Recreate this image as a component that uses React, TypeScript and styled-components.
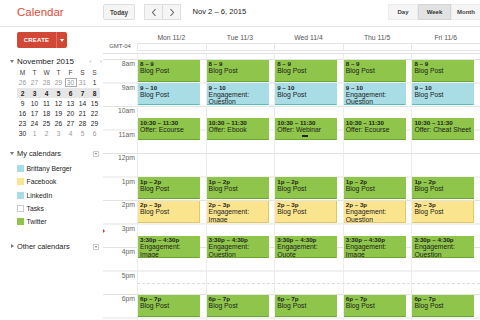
import styled, { createGlobalStyle } from 'styled-components'

const GlobalStyle = createGlobalStyle`
  html, body {
    margin: 0;
    padding: 0;
  }
  body {
    font-family: 'Liberation Sans', Arial, sans-serif;
    color: #222;
    background: #fff;
  }
`

type Tone = 'green' | 'blue' | 'yellow'
interface CalEvent {
  start: number
  end: number
  time: string
  title: string
  tone: Tone
  handle?: boolean
}
interface Day {
  label: string
  events: CalEvent[]
}

const HOUR = 23.5
const FIRST_HOUR = 8
const OFFSET = 5.5

const tones = {
  green: { bg: '#8fc54b', edge: '#6da432', side: '#8fc54b' },
  blue: { bg: '#a9dde6', edge: '#4cbfc7', side: '#a9dde6' },
  yellow: { bg: '#fbe48e', edge: '#e6c863', side: '#e6c863' },
}

function week(titles: string[]): CalEvent[] {
  return [
    { start: 8, end: 9, time: '8 – 9', title: 'Blog Post', tone: 'green' },
    { start: 9, end: 10, time: '9 – 10', title: titles[0], tone: 'blue' },
    { start: 10.5, end: 11.5, time: '10:30 – 11:30', title: titles[1], tone: 'green' },
    { start: 13, end: 14, time: '1p – 2p', title: 'Blog Post', tone: 'green' },
    { start: 14, end: 15, time: '2p – 3p', title: titles[2], tone: 'yellow' },
    { start: 15.5, end: 16.5, time: '3:30p – 4:30p', title: titles[3], tone: 'green' },
    { start: 18, end: 19, time: '6p – 7p', title: 'Blog Post', tone: 'green' },
  ]
}

const days: Day[] = [
  { label: 'Mon 11/2', events: week(['Blog Post', 'Offer: Ecourse', 'Blog Post', 'Engagement: Image']) },
  { label: 'Tue 11/3', events: week(['Engagement: Question', 'Offer: Ebook', 'Engagement: Image', 'Engagement: Question']) },
  { label: 'Wed 11/4', events: week(['Blog Post', 'Offer: Webinar', 'Blog Post', 'Engagement: Quote']) },
  { label: 'Thu 11/5', events: week(['Engagement: Question', 'Offer: Ecourse', 'Engagement: Question', 'Engagement: Image']) },
  { label: 'Fri 11/6', events: week(['Blog Post', 'Offer: Cheat Sheet', 'Blog Post', 'Engagement: Question']) },
]
days[2].events[2].handle = true

const hours = ['8am', '9am', '10am', '11am', '12pm', '1pm', '2pm', '3pm', '4pm', '5pm', '6pm', '7pm']

const miniWeeks: { d: string; muted?: boolean; today?: boolean }[][] = [
  [
    { d: '26', muted: true },
    { d: '27', muted: true },
    { d: '28', muted: true },
    { d: '29', muted: true },
    { d: '30', muted: true, today: true },
    { d: '31', muted: true },
    { d: '1' },
  ],
  ['2', '3', '4', '5', '6', '7', '8'].map((d) => ({ d })),
  ['9', '10', '11', '12', '13', '14', '15'].map((d) => ({ d })),
  ['16', '17', '18', '19', '20', '21', '22'].map((d) => ({ d })),
  ['23', '24', '25', '26', '27', '28', '29'].map((d) => ({ d })),
  [{ d: '30' }, ...['1', '2', '3', '4', '5', '6'].map((d) => ({ d, muted: true }))],
]

const calendars = [
  { name: 'Brittany Berger', color: '#a9dde6' },
  { name: 'Facebook', color: '#fbe48e' },
  { name: 'LinkedIn', color: '#a9dde6' },
  { name: 'Tasks', color: '#fff' },
  { name: 'Twitter', color: '#8fc54b' },
]

function Chevron({ dir }: { dir: 'left' | 'right' }) {
  return (
    <svg width="6" height="9" viewBox="0 0 6 9">
      <polyline
        points={dir === 'left' ? '4.5,1 1.5,4.5 4.5,8' : '1.5,1 4.5,4.5 1.5,8'}
        fill="none"
        stroke="#666"
        strokeWidth="1.1"
      />
    </svg>
  )
}

export default function App() {
  return (
    <>
      <GlobalStyle />
      <Page>
        <TopBar>
          <Logo>Calendar</Logo>
          <TodayButton>Today</TodayButton>
          <NavGroup>
            <NavButton>
              <Chevron dir="left" />
            </NavButton>
            <NavButton>
              <Chevron dir="right" />
            </NavButton>
          </NavGroup>
          <Range>Nov 2 – 6, 2015</Range>
          <ViewSwitch>
            <ViewButton $w={30}>Day</ViewButton>
            <ViewButton $w={33} $active>
              Week
            </ViewButton>
            <ViewButton $w={30}>Month</ViewButton>
          </ViewSwitch>
        </TopBar>

        <Body>
          <Sidebar>
            <CreateButton>
              <CreateLabel>CREATE</CreateLabel>
              <CreateArrow />
            </CreateButton>

            <MiniHead>
              <TriDown />
              <MiniTitle>November 2015</MiniTitle>
              <MiniArrows>
                <span>‹</span>
                <span>›</span>
              </MiniArrows>
            </MiniHead>
            <MiniRow $h={8} $first>
              {['M', 'T', 'W', 'T', 'F', 'S', 'S'].map((w, i) => (
                <MiniCell key={i} $weekday>
                  {w}
                </MiniCell>
              ))}
            </MiniRow>
            {miniWeeks.map((wk, i) => (
              <MiniRow key={i} $h={i === 0 ? 11.5 : 10} $current={i === 1}>
                {wk.map((c, j) => (
                  <MiniCell key={j} $muted={c.muted} $bold={i === 1} $today={c.today}>
                    {c.d}
                  </MiniCell>
                ))}
              </MiniRow>
            ))}

            <SectionHead $top={11}>
              <TriDown />
              <SectionTitle>My calendars</SectionTitle>
              <MenuBox />
            </SectionHead>
            <CalList>
              {calendars.map((c) => (
                <CalItem key={c.name}>
                  <Swatch $color={c.color} />
                  {c.name}
                </CalItem>
              ))}
            </CalList>

            <SectionHead $top={14}>
              <TriRight />
              <SectionTitle>Other calendars</SectionTitle>
              <MenuBox />
            </SectionHead>
          </Sidebar>

          <Main>
            <HeadRow>
              <Zone>GMT-04</Zone>
              {days.map((d) => (
                <DayHead key={d.label}>
                  <DayLabel>{d.label}</DayLabel>
                  <AllDay />
                </DayHead>
              ))}
            </HeadRow>

            <Timeline>
              <Gutter>
                <NowMark />
                {hours.map((h) => (
                  <HourLabel key={h}>{h}</HourLabel>
                ))}
              </Gutter>
              {days.map((d, i) => (
                <DayColumn key={d.label} $col={i + 2}>
                  {d.events.map((e) => (
                    <EventBox
                      key={e.time}
                      $tone={e.tone}
                      $handle={e.handle}
                      style={{
                        top: OFFSET + (e.start - FIRST_HOUR) * HOUR,
                        height: (e.end - e.start) * HOUR - 1.5,
                      }}
                    >
                      <EventTime>{e.time}</EventTime>
                      <EventTitle>{e.title}</EventTitle>
                    </EventBox>
                  ))}
                </DayColumn>
              ))}
              <HalfHourLine style={{ marginTop: OFFSET + 9.5 * HOUR }} />
            </Timeline>
          </Main>
        </Body>
      </Page>
    </>
  )
}

const Page = styled.div`
  width: 480px;
  height: 320px;
  display: flex;
  flex-direction: column;
  overflow: hidden;
`

const TopBar = styled.header`
  flex: none;
  display: flex;
  align-items: flex-start;
  padding-top: 4px;
  box-sizing: border-box;
  border-bottom: 1px solid #e5e5e5;
  height: 27px;
`

const Logo = styled.div`
  width: 103px;
  flex: none;
  box-sizing: border-box;
  padding-left: 17px;
  font-size: 11.5px;
  line-height: 17px;
  color: #dd4b39;
`

const ButtonBase = styled.div`
  height: 16px;
  box-sizing: border-box;
  background: #f5f5f5;
  border: 1px solid #dedede;
  border-radius: 2px;
  display: flex;
  align-items: center;
  justify-content: center;
  font-size: 6.3px;
  font-weight: bold;
  color: #444;
`

const TodayButton = styled(ButtonBase)`
  width: 32px;
`

const NavGroup = styled.div`
  margin-left: 9px;
  display: flex;
`

const NavButton = styled(ButtonBase)`
  width: 19px;
  border-radius: 0;
  & + & {
    border-left: none;
    width: 18px;
  }
`

const Range = styled.div`
  margin-left: 11.5px;
  font-size: 7.6px;
  line-height: 16px;
  color: #222;
`

const ViewSwitch = styled.div`
  margin-left: auto;
  display: flex;
  width: 92px;
  overflow: hidden;
`

const ViewButton = styled(ButtonBase)<{ $w: number; $active?: boolean }>`
  width: ${(p) => p.$w}px;
  flex: none;
  border-radius: 0;
  border-color: ${(p) => (p.$active ? '#d4d4d4' : '#ececec')};
  background: ${(p) => (p.$active ? '#e2e2e2' : '#f5f5f5')};
  color: ${(p) => (p.$active ? '#333' : '#444')};
  font-size: 6px;
`

const Body = styled.div`
  flex: 1;
  display: flex;
  min-height: 0;
`

const Sidebar = styled.aside`
  width: 103px;
  flex: none;
  box-sizing: border-box;
  padding: 5px 0 0 17px;
  display: flex;
  flex-direction: column;
`

const CreateButton = styled.div`
  width: 50px;
  height: 16px;
  display: flex;
  background: #d14836;
  border-radius: 2px;
`

const CreateLabel = styled.div`
  width: 39px;
  border-right: 1px solid #e0735f;
  color: #fff;
  font-size: 6px;
  font-weight: bold;
  letter-spacing: 0.2px;
  display: flex;
  align-items: center;
  justify-content: center;
`

const CreateArrow = styled.div`
  flex: 1;
  display: flex;
  align-items: center;
  justify-content: center;
  &::after {
    content: '';
    border-left: 2.5px solid transparent;
    border-right: 2.5px solid transparent;
    border-top: 3px solid #fff;
  }
`

const TriDown = styled.span`
  position: absolute;
  left: -7px;
  top: 3px;
  border-left: 2px solid transparent;
  border-right: 2px solid transparent;
  border-top: 3px solid #777;
`

const TriRight = styled.span`
  position: absolute;
  left: -6px;
  top: 2px;
  border-top: 2px solid transparent;
  border-bottom: 2px solid transparent;
  border-left: 3px solid #777;
`

const MiniHead = styled.div`
  position: relative;
  margin-top: 8.5px;
  height: 9px;
  display: flex;
  align-items: center;
  width: 84px;
`

const MiniTitle = styled.div`
  font-size: 8px;
  color: #222;
`

const MiniArrows = styled.div`
  margin-left: auto;
  display: flex;
  gap: 8px;
  font-size: 7px;
  color: #bbb;
  margin-right: -1px;
`

const MiniRow = styled.div<{ $h: number; $current?: boolean; $first?: boolean }>`
  display: flex;
  height: ${(p) => p.$h}px;
  margin-top: ${(p) => (p.$first ? 3 : 0)}px;
  margin-left: -0.5px;
  background: ${(p) => (p.$current ? '#e6e6e6' : 'transparent')};
  width: 83px;
`

const MiniCell = styled.div<{ $muted?: boolean; $bold?: boolean; $today?: boolean; $weekday?: boolean }>`
  width: 12px;
  flex: none;
  display: flex;
  align-items: center;
  justify-content: center;
  font-size: 6.6px;
  font-weight: ${(p) => (p.$bold ? 'bold' : 'normal')};
  color: ${(p) => (p.$muted ? '#999' : p.$weekday ? '#444' : '#222')};
  box-sizing: border-box;
  border: ${(p) => (p.$today ? '1px solid #aaa' : 'none')};
  height: ${(p) => (p.$today ? '9px' : 'auto')};
  align-self: center;
`

const SectionHead = styled.div<{ $top: number }>`
  position: relative;
  margin-top: ${(p) => p.$top}px;
  height: 9px;
  width: 82px;
  display: flex;
  align-items: center;
`

const SectionTitle = styled.div`
  font-size: 7.4px;
  color: #222;
`

const MenuBox = styled.div`
  margin-left: auto;
  width: 6px;
  height: 6px;
  box-sizing: border-box;
  border: 1px solid #ccc;
  display: flex;
  align-items: center;
  justify-content: center;
  &::after {
    content: '';
    border-left: 1.5px solid transparent;
    border-right: 1.5px solid transparent;
    border-top: 2px solid #777;
  }
`

const CalList = styled.div`
  margin-top: 4px;
  display: flex;
  flex-direction: column;
`

const CalItem = styled.div`
  height: 13.25px;
  display: flex;
  align-items: center;
  font-size: 6.8px;
  color: #222;
`

const Swatch = styled.span<{ $color: string }>`
  width: 7px;
  height: 7px;
  box-sizing: border-box;
  margin-right: 2.5px;
  background: ${(p) => p.$color};
  border: ${(p) => (p.$color === '#fff' ? '1px solid #ccc' : 'none')};
`

const Main = styled.main`
  flex: 1;
  min-width: 0;
  display: flex;
  flex-direction: column;
`

const HeadRow = styled.div`
  height: 26px;
  flex: none;
  display: grid;
  grid-template-columns: 34px repeat(5, 1fr);
`

const Zone = styled.div`
  align-self: end;
  margin-bottom: 3px;
  font-size: 6px;
  color: #555;
  text-align: center;
  line-height: 8px;
`

const DayHead = styled.div`
  display: flex;
  flex-direction: column;
`

const DayLabel = styled.div`
  height: 16px;
  box-sizing: border-box;
  padding-top: 7px;
  text-align: center;
  font-size: 6.8px;
  line-height: 8px;
  color: #555;
`

const AllDay = styled.div`
  height: 8px;
  box-sizing: border-box;
  border-top: 1px solid #e3e3e3;
  border-bottom: 1px solid #e3e3e3;
  border-left: 1px solid #e8e8e8;
`

const Timeline = styled.div`
  flex: 1;
  min-height: 0;
  overflow: hidden;
  position: relative;
  display: grid;
  grid-template-columns: 34px repeat(5, 1fr);
  grid-template-rows: 100%;
  border-top: 1px solid #e0e0e0;
  background-image: linear-gradient(#e3e3e3 1px, transparent 1px);
  background-size: 100% ${HOUR}px;
  background-position: 0 ${OFFSET - 0.5}px;
`

const Gutter = styled.div`
  grid-row: 1;
  grid-column: 1;
  position: relative;
  padding-top: ${OFFSET}px;
`

const HourLabel = styled.div`
  height: ${HOUR}px;
  box-sizing: border-box;
  padding: 0.5px 2px 0 0;
  text-align: right;
  font-size: 6.8px;
  line-height: 8px;
  color: #666;
`

const NowMark = styled.span`
  position: absolute;
  left: 0;
  top: 175px;
  border-top: 2px solid transparent;
  border-bottom: 2px solid transparent;
  border-left: 2px solid #d73c2c;
`

const DayColumn = styled.div<{ $col: number }>`
  grid-row: 1;
  grid-column: ${(p) => p.$col};
  position: relative;
  border-left: 1px solid #ececec;
`

const EventBox = styled.div<{ $tone: Tone; $handle?: boolean }>`
  position: absolute;
  left: 0;
  right: 5.5px;
  box-sizing: border-box;
  padding: 0.5px 1px 0 2px;
  background: ${(p) => tones[p.$tone].bg};
  border-bottom: 1px solid ${(p) => tones[p.$tone].edge};
  border-right: 1px solid ${(p) => tones[p.$tone].side};
  overflow: hidden;
  color: #1c1c1c;
  &::after {
    content: '';
    display: ${(p) => (p.$handle ? 'block' : 'none')};
    position: absolute;
    left: 50%;
    bottom: 2px;
    width: 6px;
    height: 2px;
    margin-left: -4px;
    background: #222;
  }
`

const EventTime = styled.div`
  font-size: 6.2px;
  font-weight: bold;
  line-height: 7px;
  white-space: nowrap;
`

const EventTitle = styled.div`
  font-size: 6.8px;
  line-height: 7.7px;
`

const HalfHourLine = styled.div`
  grid-row: 1;
  grid-column: 2 / -1;
  align-self: start;
  height: 0;
  border-top: 1px dashed #dcdcdc;
  pointer-events: none;
  z-index: 1;
`
